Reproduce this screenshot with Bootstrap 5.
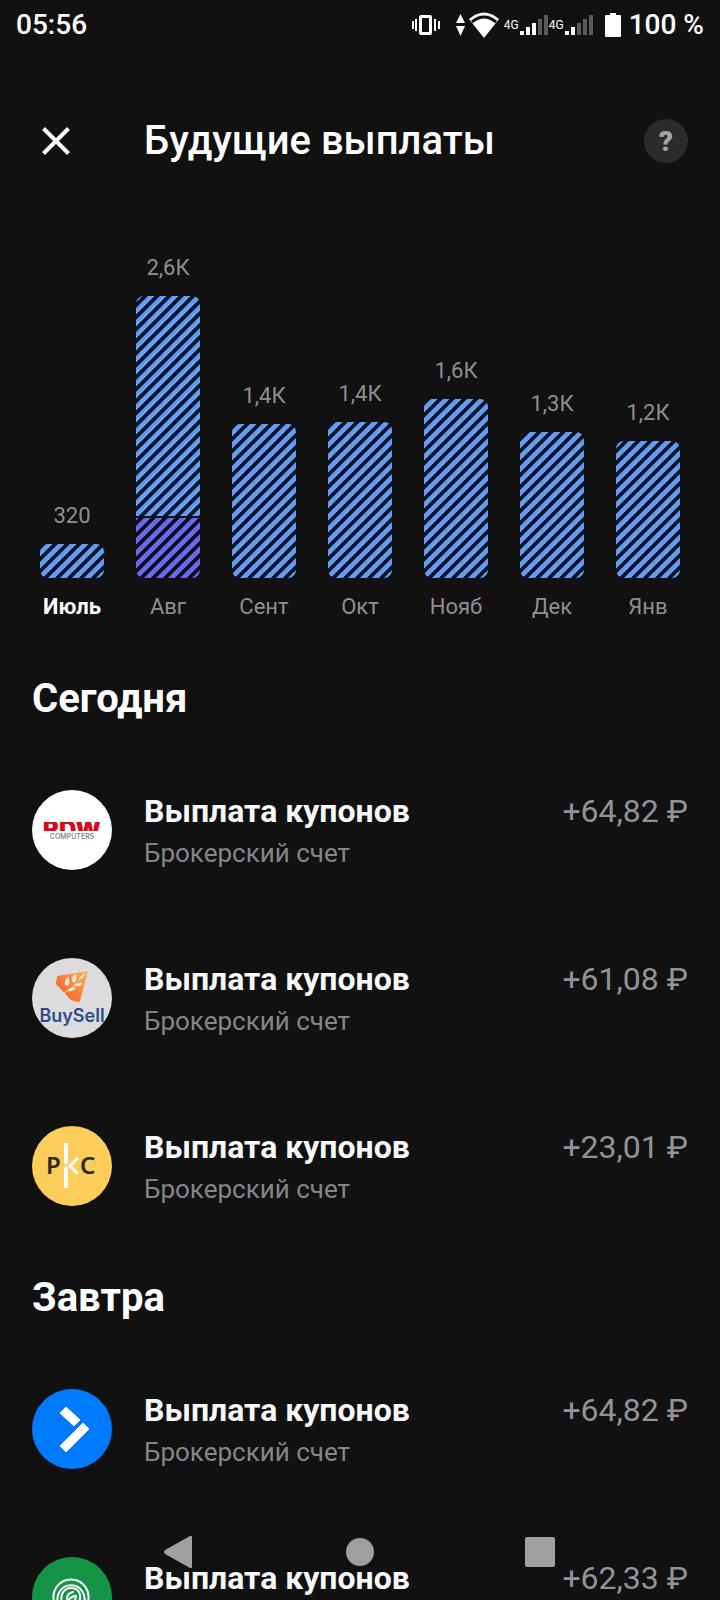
<!DOCTYPE html>
<html lang="ru" data-bs-theme="dark">
<head>
<meta charset="utf-8">
<meta name="viewport" content="width=device-width, initial-scale=1">
<title>Будущие выплаты</title>
<link href="https://cdn.jsdelivr.net/npm/bootstrap@5.3.0/dist/css/bootstrap.min.css" rel="stylesheet">
<style>
  body { background: #111; color: #f7f8f9; font-family: Roboto, "Noto Sans", sans-serif; }
  .status { height: 50px; padding: 0 16px; font-size: 28px; font-weight: 500; line-height: 32px; color: #fff; }
  .net { gap: 1px; }
  .net-label { font-size: 12px; line-height: 14px; font-weight: 400; }
  .topbar { margin-top: 55px; height: 72px; padding: 0 32px; }
  .topbar h1 { font-size: 40px; line-height: 48px; font-weight: 500; }
  .lead-slot { width: 80px; margin-right: 32px; }
  .close-btn { padding: 10px; color: #fff; }
  .help-btn { width: 44px; height: 44px; background: #2b2b2c; color: #a4a5a9; font-size: 28px; font-weight: 900; line-height: 46px; }
  .chart { margin: 77px 24px 29px; font-size: 22px; line-height: 28px; color: #8f8f91; }
  .chart-col { gap: 14px; }
  .month { line-height: 30px; }
  .stack { width: 64px; gap: 2px; border-radius: 8px; }
  .seg { background: linear-gradient(135deg, #649cee 0 9%, #04122c 13% 31%, #649cee 35% 59%, #04122c 63% 81%, #649cee 85%) 0 100% / 12px 12px; }
  .seg-alt { background-image: linear-gradient(135deg, #6a6be4 0 9%, #0b0b2c 13% 31%, #6a6be4 35% 59%, #0b0b2c 63% 81%, #6a6be4 85%); }
  .day { padding: 24px 32px 0; }
  .day h2 { font-size: 40px; line-height: 48px; font-weight: 700; margin-bottom: 23px; }
  .payout { height: 168px; padding: 44px 0; gap: 32px; }
  .payout-name { font-size: 32px; line-height: 42px; font-weight: 700; }
  .payout-sub { font-size: 26px; line-height: 42px; color: #858688; }
  .payout-sum { font-size: 32px; line-height: 42px; color: #929397; }
  .sysnav { width: 75%; padding-bottom: 32px; }
  .sysnav button { color: #a0a0a0; }
</style>
</head>
<body class="vh-100 overflow-hidden">

<div class="status d-flex align-items-center">
  <time class="me-auto">05:56</time>
  <svg width="28" height="20" viewBox="0 0 28 20" fill="#fff" aria-hidden="true">
    <path fill-rule="evenodd" d="M9 0h9a2 2 0 0 1 2 2v16a2 2 0 0 1-2 2H9a2 2 0 0 1-2-2V2a2 2 0 0 1 2-2zm1 3v14h7V3z"/>
    <path d="M0 6h2v8H0zM3 4h2v12H3zM22 4h2v12h-2zM26 6h2v8h-2z"/>
  </svg>
  <svg class="ms-3" width="9" height="24" viewBox="0 0 9 24" fill="#fff" aria-hidden="true"><path d="M0 10l4.500-9L9 10zM0 13h9l-4.500 10z"/></svg>
  <div class="net d-flex align-items-center ps-1">
    <svg width="30" height="26" viewBox="0 0 30 26" aria-hidden="true">
      <path d="M0 7Q15-6 30 7L15 26z" fill="#fff"/><path d="M3 10Q15 0 27 10" fill="none" stroke="#111" stroke-width="3"/>
    </svg>
    <span class="net-label ps-1">4G</span>
    <svg width="28" height="20" viewBox="0 0 28 20" aria-hidden="true">
      <path fill="#fff" d="M0 16h4v4H0zM6 12h4v8H6zM12 8h4v12h-4z"/><path fill="#5a5a5a" d="M18 4h4v16h-4zM24 0h4v20h-4z"/>
    </svg>
    <span class="net-label">4G</span>
    <svg width="28" height="20" viewBox="0 0 28 20" aria-hidden="true">
      <path fill="#fff" d="M0 16h4v4H0zM6 12h4v8H6z"/><path fill="#5a5a5a" d="M12 8h4v12h-4zM18 4h4v16h-4zM24 0h4v20h-4z"/>
    </svg>
  </div>
  <svg class="mx-2 ps-1" width="20" height="24" viewBox="0 0 16 24" fill="#fff" aria-hidden="true"><path d="M5 0h6v2h4q1 0 1 1v20q0 1-1 1H1q-1 0-1-1V3q0-1 1-1h4z"/></svg>
  <span>100 %</span>
</div>

<header class="topbar d-flex align-items-center">
  <div class="lead-slot d-flex">
    <button type="button" class="close-btn btn border-0 d-flex" aria-label="Закрыть">
      <svg width="28" height="28" viewBox="0 0 28 28" fill="none" stroke="currentColor" stroke-width="4"><path d="M1.500 1.500l25 25M26.500 1.500l-25 25"/></svg>
    </button>
  </div>
  <h1 class="m-0 me-auto">Будущие выплаты</h1>
  <button type="button" class="help-btn btn border-0 rounded-circle p-0" aria-label="Справка">?</button>
</header>

<main>
  <div class="chart d-flex align-items-end">
    <div class="chart-col d-flex flex-column align-items-center flex-fill w-100"><span>320</span><div class="stack overflow-hidden d-flex flex-column"><div class="seg" style="height:34px"></div></div><span class="month text-white fw-bold">Июль</span></div>
    <div class="chart-col d-flex flex-column align-items-center flex-fill w-100"><span>2,6К</span><div class="stack overflow-hidden d-flex flex-column"><div class="seg" style="height:220px"></div><div class="seg seg-alt" style="height:60px"></div></div><span class="month">Авг</span></div>
    <div class="chart-col d-flex flex-column align-items-center flex-fill w-100"><span>1,4К</span><div class="stack overflow-hidden d-flex flex-column"><div class="seg" style="height:154px"></div></div><span class="month">Сент</span></div>
    <div class="chart-col d-flex flex-column align-items-center flex-fill w-100"><span>1,4К</span><div class="stack overflow-hidden d-flex flex-column"><div class="seg" style="height:156px"></div></div><span class="month">Окт</span></div>
    <div class="chart-col d-flex flex-column align-items-center flex-fill w-100"><span>1,6К</span><div class="stack overflow-hidden d-flex flex-column"><div class="seg" style="height:179px"></div></div><span class="month">Нояб</span></div>
    <div class="chart-col d-flex flex-column align-items-center flex-fill w-100"><span>1,3К</span><div class="stack overflow-hidden d-flex flex-column"><div class="seg" style="height:146px"></div></div><span class="month">Дек</span></div>
    <div class="chart-col d-flex flex-column align-items-center flex-fill w-100"><span>1,2К</span><div class="stack overflow-hidden d-flex flex-column"><div class="seg" style="height:137px"></div></div><span class="month">Янв</span></div>
  </div>

  <section class="day">
    <h2>Сегодня</h2>
    <ul class="list-unstyled m-0">
      <li class="payout d-flex">
        <svg class="flex-shrink-0" width="80" height="80" viewBox="0 0 80 80" role="img" aria-label="RDW Computers">
          <circle cx="40" cy="40" r="40" fill="#fff"/>
          <svg x="10" y="32" width="60" height="9" viewBox="0 0 60 9"><text x="30" y="16" text-anchor="middle" font-family="Inter" font-weight="900" font-size="24" fill="#d20a1c">RDW</text></svg>
          <text x="40" y="49" text-anchor="middle" font-family="Inter" font-weight="500" font-size="7" fill="#777">COMPUTERS</text>
        </svg>
        <div class="flex-grow-1"><div class="payout-name">Выплата купонов</div><div class="payout-sub">Брокерский счет</div></div>
        <div class="payout-sum text-nowrap">+64,82 ₽</div>
      </li>
      <li class="payout d-flex">
        <svg class="flex-shrink-0" width="80" height="80" viewBox="0 0 80 80" role="img" aria-label="BuySell">
          <defs><linearGradient id="flame" x1="0" y1="1" x2="1" y2="0"><stop offset=".3" stop-color="#f37032"/><stop offset="1" stop-color="#fcb44c"/></linearGradient></defs>
          <circle cx="40" cy="40" r="40" fill="#dcdcdc"/>
          <path d="M25 18l31-5-8 30-2 1-7-2-15-16z" fill="url(#flame)"/>
          <g fill="#f3e6dc"><path d="M33 27q-1-5 3-8 3 5 0 9zM40 23q-1-5 4-7 2 5-2 9zM47 20q2-3 6-5-1 5-5 6zM36 32q4-4 8-2-3 4-8 3zM43 27q4-3 8-2-3 4-8 3z"/></g>
          <path d="M31 36Q41 30 50 19" fill="none" stroke="#f3e6dc"/>
          <text x="40" y="64" text-anchor="middle" font-family="Inter" font-weight="600" font-size="18" fill="#304c88">BuySell</text>
        </svg>
        <div class="flex-grow-1"><div class="payout-name">Выплата купонов</div><div class="payout-sub">Брокерский счет</div></div>
        <div class="payout-sum text-nowrap">+61,08 ₽</div>
      </li>
      <li class="payout d-flex">
        <svg class="flex-shrink-0" width="80" height="80" viewBox="0 0 80 80" role="img" aria-label="РКС">
          <circle cx="40" cy="40" r="40" fill="#fccd5a"/>
          <g font-family="Noto Sans" font-weight="600" font-size="24" fill="#2b2a14"><text x="14" y="48">Р</text><text x="48" y="48">С</text></g>
          <path d="M32 17h4v20l-2 2-2-2zM32 62V42l2-2 2 2v20z" fill="#fff"/>
          <path d="M46 32l-8 8 8 8" fill="none" stroke="#fff" stroke-width="3"/>
        </svg>
        <div class="flex-grow-1"><div class="payout-name">Выплата купонов</div><div class="payout-sub">Брокерский счет</div></div>
        <div class="payout-sum text-nowrap">+23,01 ₽</div>
      </li>
    </ul>
  </section>

  <section class="day">
    <h2>Завтра</h2>
    <ul class="list-unstyled m-0">
      <li class="payout d-flex">
        <svg class="flex-shrink-0" width="80" height="80" viewBox="0 0 80 80" aria-hidden="true">
          <circle cx="40" cy="40" r="40" fill="#007bff"/>
          <path d="M28 24l6-6 14 13-6 6zM28 57l23-23 6 6-23 23z" fill="#fff" stroke="#fff" stroke-linejoin="round"/>
        </svg>
        <div class="flex-grow-1"><div class="payout-name">Выплата купонов</div><div class="payout-sub">Брокерский счет</div></div>
        <div class="payout-sum text-nowrap">+64,82 ₽</div>
      </li>
      <li class="payout d-flex">
        <svg class="flex-shrink-0" width="80" height="80" viewBox="0 0 80 80" aria-hidden="true">
          <circle cx="40" cy="40" r="40" fill="#159447"/>
          <g fill="none" stroke="#fff" stroke-width="2" stroke-linecap="round">
            <path d="M23 47a17.500 17.500 0 1 1 32 0M27 48a13.500 13.500 0 1 1 24 0M31 47c-4-7 0-16 8-16s11 7 8 14M35 42q0-6 6-7M37 45q-1-3 3-5t4-1-2 7"/>
          </g>
        </svg>
        <div class="flex-grow-1"><div class="payout-name">Выплата купонов</div><div class="payout-sub">Брокерский счет</div></div>
        <div class="payout-sum text-nowrap">+62,33 ₽</div>
      </li>
    </ul>
  </section>
</main>

<nav class="sysnav fixed-bottom mx-auto d-flex" aria-label="Системная навигация">
  <button type="button" class="btn border-0 p-0 w-100 d-flex justify-content-center" aria-label="Назад"><svg width="32" height="32" viewBox="0 0 32 32" fill="currentColor"><path d="M26 0q2-1 2 2v28q0 3-2 2L1 18q-2-2 0-4z"/></svg></button>
  <button type="button" class="btn border-0 p-0 w-100 d-flex justify-content-center" aria-label="Домой"><svg width="32" height="32" viewBox="0 0 32 32" fill="currentColor"><circle cx="16" cy="16" r="14"/></svg></button>
  <button type="button" class="btn border-0 p-0 w-100 d-flex justify-content-center" aria-label="Недавние"><svg width="32" height="32" viewBox="0 0 32 32" fill="currentColor"><rect x="1" y="1" width="30" height="30" rx="2"/></svg></button>
</nav>

<script src="https://cdn.jsdelivr.net/npm/bootstrap@5.3.0/dist/js/bootstrap.bundle.min.js"></script>
</body>
</html>
